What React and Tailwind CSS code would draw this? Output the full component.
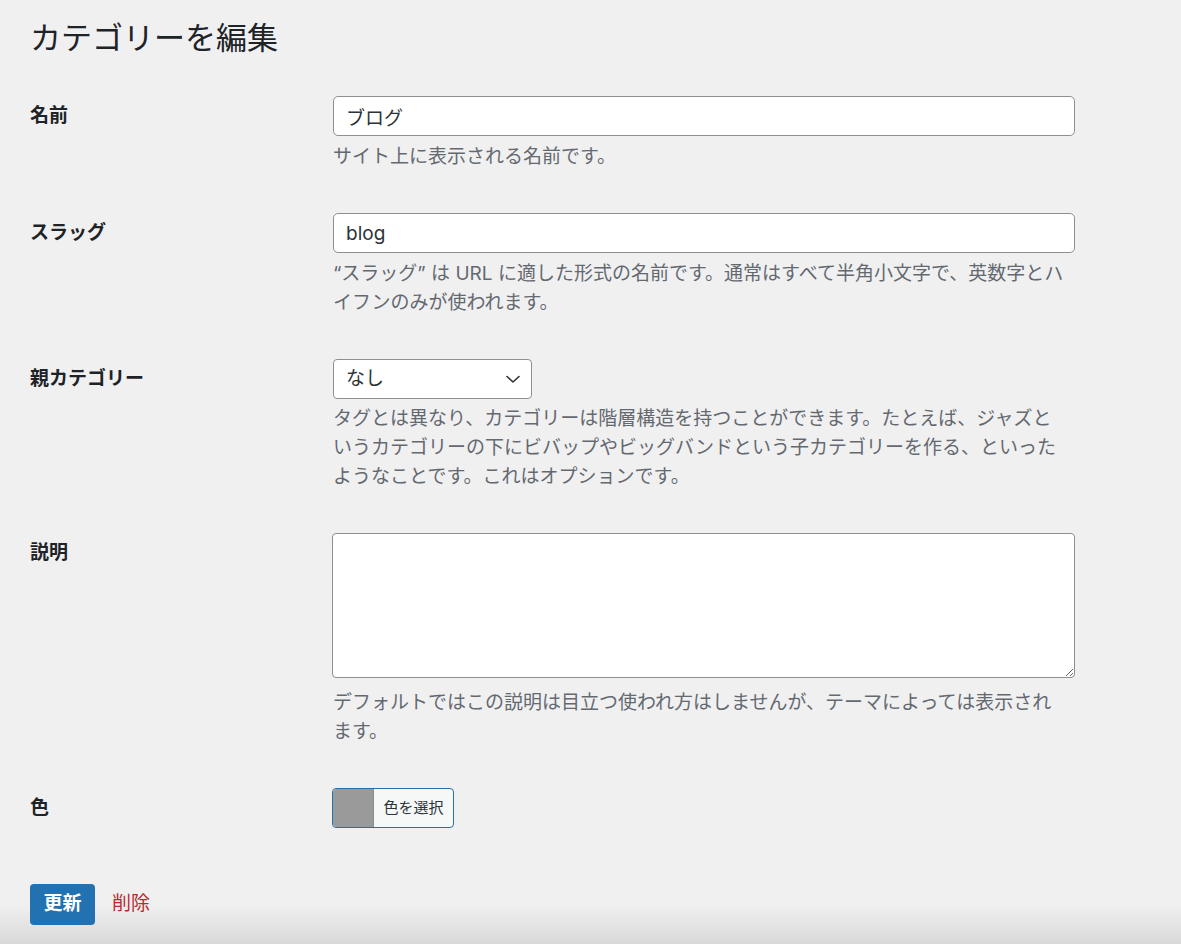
import React, { useState } from 'react';

const Row = ({ label, children, className = '' }) => (
  <div className={`flex ${className}`}>
    <div className="w-[303px] shrink-0 h-[40px] flex items-center text-[19px] font-semibold text-[#1d2327]">
      {label}
    </div>
    <div className="w-[742px]">{children}</div>
  </div>
);

const Help = ({ children, className = 'mt-[6px]' }) => (
  <p className={`text-[19px] leading-[29px] text-[#646970] whitespace-nowrap ${className}`}>{children}</p>
);

const App = () => {
  const [name, setName] = useState('ブログ');
  const [slug, setSlug] = useState('blog');
  const [parent, setParent] = useState('none');
  const [desc, setDesc] = useState('');

  return (
    <div className="relative min-h-[944px] overflow-hidden bg-[#f0f0f1] pl-[30px] font-['Inter','Noto_Sans_CJK_JP',sans-serif]">
      <h1 className="pt-[18px] text-[31px] leading-[40px] font-normal text-[#1d2327]">カテゴリーを編集</h1>

      <div className="mt-[38px] flex flex-col gap-[42px]">
        <Row label="名前">
          <input
            value={name}
            onChange={e => setName(e.target.value)}
            className="block w-full h-[40px] px-[12px] bg-white border border-[#8c8f94] rounded-[5px] text-[19px] text-[#2c3338] outline-none"
          />
          <Help>サイト上に表示される名前です。</Help>
        </Row>

        <Row label="スラッグ">
          <input
            value={slug}
            onChange={e => setSlug(e.target.value)}
            className="block w-full h-[40px] px-[12px] bg-white border border-[#8c8f94] rounded-[5px] text-[19px] text-[#2c3338] outline-none"
          />
          <Help>
            “スラッグ” は URL に適した形式の名前です。通常はすべて半角小文字で、英数字とハ<br />
            イフンのみが使われます。
          </Help>
        </Row>

        <Row label="親カテゴリー">
          <div className="relative w-[199px] h-[40px]">
            <select
              value={parent}
              onChange={e => setParent(e.target.value)}
              className="appearance-none block w-full h-full pl-[12px] pr-[32px] bg-white border border-[#8c8f94] rounded-[4px] text-[19px] text-[#2c3338] outline-none"
            >
              <option value="none">なし</option>
            </select>
            <svg className="pointer-events-none absolute right-[11px] top-[14px] w-[16px] h-[12px]" viewBox="0 0 16 12" fill="none" stroke="#2c3338" strokeWidth="1.6" strokeLinecap="round" strokeLinejoin="round">
              <path d="M2 3.5l6 5.5 6-5.5" />
            </svg>
          </div>
          <Help className="mt-[5px]">
            タグとは異なり、カテゴリーは階層構造を持つことができます。たとえば、ジャズと<br />
            いうカテゴリーの下にビバップやビッグバンドという子カテゴリーを作る、といった<br />
            ようなことです。これはオプションです。
          </Help>
        </Row>

        <Row label="説明">
          <textarea
            value={desc}
            onChange={e => setDesc(e.target.value)}
            className="block w-[743px] h-[145px] -ml-[1px] px-[12px] py-[8px] bg-white border border-[#8c8f94] rounded-[4px] text-[19px] text-[#2c3338] outline-none"
          />
          <Help className="mt-[10px]">
            デフォルトではこの説明は目立つ使われ方はしませんが、テーマによっては表示され<br />
            ます。
          </Help>
        </Row>

        <Row label="色">
          <button className="-ml-[1px] flex h-[40px] w-[122px] overflow-hidden rounded-[4px] border border-[#2271b1] bg-[#f6f7f7]">
            <span className="w-[41px] h-full bg-[#9a9a9a] border-r border-[#8a8a8a]"></span>
            <span className="flex-1 h-full flex items-center justify-center text-[15px] text-[#2c3338]">色を選択</span>
          </button>
        </Row>
      </div>

      <div className="relative z-10 mt-[56px] flex items-center">
        <button className="h-[41px] w-[65px] rounded-[4px] bg-[#2271b1] text-[19px] font-semibold text-white">
          更新
        </button>
        <a href="#" className="ml-[17px] text-[19px] text-[#b32d2e]">削除</a>
      </div>

      <div className="pointer-events-none absolute bottom-0 left-0 right-0 h-[40px] bg-gradient-to-b from-[#f0f0f1]/0 to-[#d9d9d9]"></div>
    </div>
  );
};

export default App;
